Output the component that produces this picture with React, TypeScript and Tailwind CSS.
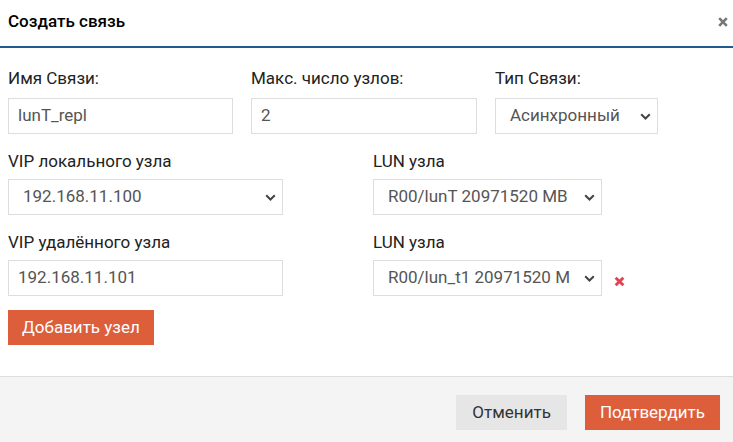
import React from "react";

const Chevron = () => (
  <svg width="11" height="7" viewBox="0 0 11 7" className="shrink-0">
    <path d="M1.2 1.2 L5.5 5.5 L9.8 1.2" fill="none" stroke="#444" strokeWidth="2" />
  </svg>
);

function Select({ value, w }: { value: string; w: string }) {
  return (
    <div className={`${w} h-[36px] border border-[#dddddd] bg-white flex items-center pl-[14px] pr-[6px]`}>
      <div className="flex-1 min-w-0 overflow-hidden whitespace-nowrap text-[#555555] mr-[13px]">{value}</div>
      <Chevron />
    </div>
  );
}

function Input({ value, w }: { value: string; w: string }) {
  return (
    <div className={`${w} h-[36px] border border-[#dddddd] bg-white flex items-center px-[9px] text-[#555555]`}>
      {value}
    </div>
  );
}

export default function App() {
  return (
    <div
      className="w-[733px] h-[442px] bg-white flex flex-col text-[17px] text-[#222222]"
      style={{ fontFamily: "Roboto, 'Noto Sans', sans-serif" }}
    >
      <div className="h-[48px] border-b-2 border-[#1f5b8e] flex items-center justify-between pl-[8px] pr-[5px] pb-[2px]">
        <div className="text-[17px] font-medium text-black">Создать связь</div>
        <svg width="10" height="10" viewBox="0 0 10 10">
          <path d="M1.2 1.2 L8.8 8.8 M8.8 1.2 L1.2 8.8" stroke="#777777" strokeWidth="2.6" />
        </svg>
      </div>
      <div className="flex-1 px-[8px] pt-[20px]">
        <div className="flex gap-[18px]">
          <div className="flex flex-col gap-[10px]">
            <div className="leading-[20px]">Имя Связи:</div>
            <Input value="lunT_repl" w="w-[225px]" />
          </div>
          <div className="flex flex-col gap-[10px]">
            <div className="leading-[20px]">Макс. число узлов:</div>
            <Input value="2" w="w-[226px]" />
          </div>
          <div className="flex flex-col gap-[10px]">
            <div className="leading-[20px]">Тип Связи:</div>
            <Select value="Асинхронный" w="w-[163px]" />
          </div>
        </div>
        <div className="flex gap-[90px] mt-[17px]">
          <div className="flex flex-col gap-[8px]">
            <div className="leading-[20px]">VIP локального узла</div>
            <Select value="192.168.11.100" w="w-[275px]" />
          </div>
          <div className="flex flex-col gap-[8px]">
            <div className="leading-[20px]">LUN узла</div>
            <Select value="R00/lunT 20971520 MB" w="w-[229px]" />
          </div>
        </div>
        <div className="flex gap-[90px] mt-[17px]">
          <div className="flex flex-col gap-[8px]">
            <div className="leading-[20px]">VIP удалённого узла</div>
            <Input value="192.168.11.101" w="w-[275px]" />
          </div>
          <div className="flex flex-col gap-[8px]">
            <div className="leading-[20px]">LUN узла</div>
            <div className="flex items-center gap-[12px]">
              <Select value="R00/lun_t1 20971520 MB" w="w-[229px]" />
              <svg width="11" height="11" viewBox="0 0 10 10" className="mt-[6px]">
                <path d="M1.5 1.5 L8.5 8.5 M8.5 1.5 L1.5 8.5" stroke="#e0434f" strokeWidth="2.6" strokeLinecap="butt" />
              </svg>
            </div>
          </div>
        </div>
        <div className="mt-[14px]">
          <div className="inline-flex items-center h-[35px] px-[14px] bg-[#dd5e3a] text-white">Добавить узел</div>
        </div>
      </div>
      <div className="h-[66px] border-t border-[#dddddd] bg-[#f4f4f4] flex justify-end items-start pt-[18px] pr-[13px] gap-[18px]">
        <div className="h-[35px] px-[16px] flex items-center bg-[#e6e6e6] text-[#333333]">Отменить</div>
        <div className="h-[35px] px-[15px] flex items-center bg-[#dd5e3a] text-white">Подтвердить</div>
      </div>
    </div>
  );
}
